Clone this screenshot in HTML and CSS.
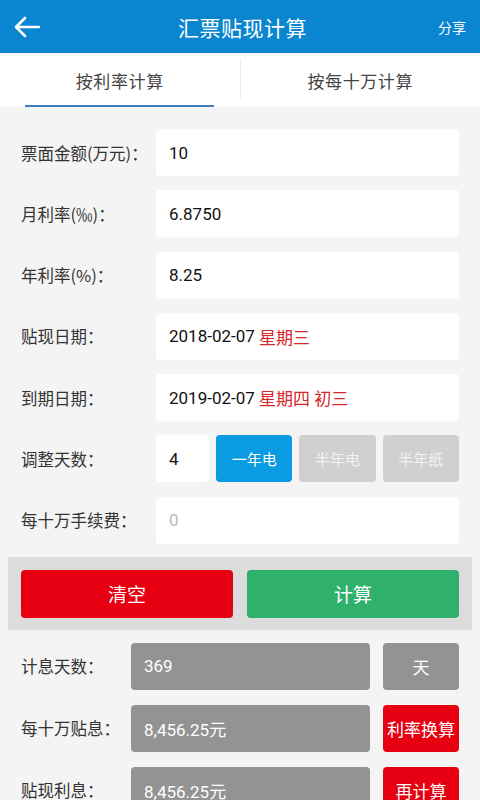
FILE: index.html
```html
<!DOCTYPE html>
<html lang="zh">
<head>
<meta charset="utf-8">
<link rel="stylesheet" href="styles.css">
</head>
<body>
<div class="header">
  <svg class="back" width="28" height="24" viewBox="0 0 28 24"><path d="M26 12H3M12 3L3 12l9 9" fill="none" stroke="#fff" stroke-width="2.6" stroke-linecap="round" stroke-linejoin="round"/></svg>
  <div class="title">汇票贴现计算</div>
  <div class="share">分享</div>
</div>
<div class="tabs">
  <div class="tab active"><span>按利率计算</span></div>
  <div class="sep"></div>
  <div class="tab"><span>按每十万计算</span></div>
</div>
<div class="form">
  <div class="row"><div class="label">票面金额(万元)<span class="colon">：</span></div><div class="box">10</div></div>
  <div class="row"><div class="label">月利率(‰)<span class="colon">：</span></div><div class="box">6.8750</div></div>
  <div class="row"><div class="label">年利率(%)<span class="colon">：</span></div><div class="box">8.25</div></div>
  <div class="row"><div class="label">贴现日期<span class="colon">：</span></div><div class="box">2018-02-07 <span class="red">星期三</span></div></div>
  <div class="row"><div class="label">到期日期<span class="colon">：</span></div><div class="box">2019-02-07 <span class="red">星期四 初三</span></div></div>
  <div class="row"><div class="label">调整天数<span class="colon">：</span></div>
    <div class="adj">
      <div class="box small">4</div>
      <div class="opt on">一年电</div>
      <div class="opt">半年电</div>
      <div class="opt">半年纸</div>
    </div>
  </div>
  <div class="row"><div class="label">每十万手续费<span class="colon">：</span></div><div class="box ph">0</div></div>
</div>
<div class="actions">
  <div class="btn clear">清空</div>
  <div class="btn calc">计算</div>
</div>
<div class="results">
  <div class="rrow"><div class="rlabel">计息天数<span class="colon">：</span></div><div class="val">369</div><div class="side grey">天</div></div>
  <div class="rrow"><div class="rlabel">每十万贴息<span class="colon">：</span></div><div class="val">8,456.25元</div><div class="side redbtn">利率换算</div></div>
  <div class="rrow"><div class="rlabel">贴现利息<span class="colon">：</span></div><div class="val">8,456.25元</div><div class="side redbtn">再计算</div></div>
</div>
</body>
</html>
```
FILE: styles.css
```css
* { box-sizing: border-box; }
html, body { margin: 0; padding: 0; }
body {
  width: 480px;
  height: 800px;
  overflow: hidden;
  background: #f4f4f4;
  font-family: Roboto, "Noto Sans CJK SC", sans-serif;
  color: #333;
}
.header {
  height: 53px;
  background: #0a85cf;
  display: flex;
  align-items: center;
  padding: 0 14px 0 13px;
  color: #fff;
}
.back { flex: none; }
.title {
  flex: 1;
  text-align: center;
  font-size: 21px;
  padding-left: 6px;
  letter-spacing: 0.5px;
}
.share { font-size: 14px; width: 28px; }
.tabs {
  height: 54px;
  background: #fff;
  display: flex;
  align-items: stretch;
}
.tab {
  flex: 1;
  display: flex;
  justify-content: center;
  align-items: center;
  font-size: 17px;
  color: #444;
  letter-spacing: 0.6px;
}
.tab.active { position: relative; }
.tab.active::after {
  content: "";
  position: absolute;
  left: 25px;
  right: 26px;
  bottom: 0;
  height: 2px;
  background: #3a7fbf;
}
.sep { width: 1px; background: #eeeeee; margin: 6px 0 8px; }
.form { padding: 22px 21px 0 21px; display: flex; flex-direction: column; gap: 14.3px; }
.row { display: flex; align-items: center; height: 47px; }
.label, .rlabel {
  font-family: "Noto Sans CJK SC", sans-serif;
  font-size: 16.5px;
  color: #333;
  white-space: nowrap;
}
.label { width: 135px; }
.rlabel { width: 110px; }
.colon { font-family: "Noto Sans CJK TC", sans-serif; }
.box {
  flex: 1;
  height: 47px;
  background: #fff;
  border-radius: 4px;
  display: flex;
  align-items: center;
  padding-left: 13px;
  font-size: 17px;
  color: #111;
  white-space: pre;
}
.red { color: #d5262a; }
.ph { color: #bbb; }
.adj { flex: 1; display: flex; gap: 7px; height: 47px; }
.box.small { flex: none; width: 53px; }
.opt {
  flex: 1;
  border-radius: 4px;
  background: #d0d0d0;
  color: #f2f2f2;
  font-size: 15px;
  display: flex;
  align-items: center;
  justify-content: center;
}
.opt.on { background: #0a9be2; color: #fff; }
.actions {
  margin: 13px 8px 0 8px;
  background: #dcdcdc;
  padding: 13px 13px 12px 13px;
  display: flex;
  gap: 14px;
}
.btn {
  flex: 1;
  height: 48px;
  border-radius: 4px;
  color: #fff;
  font-size: 19px;
  display: flex;
  align-items: center;
  justify-content: center;
}
.clear { background: #e60012; }
.calc { background: #2fb16b; }
.results { padding: 13px 21px 0 21px; display: flex; flex-direction: column; gap: 15px; }
.rrow { display: flex; align-items: center; height: 47px; }
.val {
  width: 239px;
  height: 47px;
  background: #939393;
  border-radius: 4px;
  color: #fff;
  font-size: 17px;
  display: flex;
  align-items: center;
  padding-left: 13px;
}
.side {
  margin-left: 13px;
  width: 76px;
  height: 47px;
  border-radius: 4px;
  color: #fff;
  font-size: 17px;
  display: flex;
  align-items: center;
  justify-content: center;
  white-space: nowrap;
}
.grey { background: #939393; }
.redbtn { background: #e60012; }
```
